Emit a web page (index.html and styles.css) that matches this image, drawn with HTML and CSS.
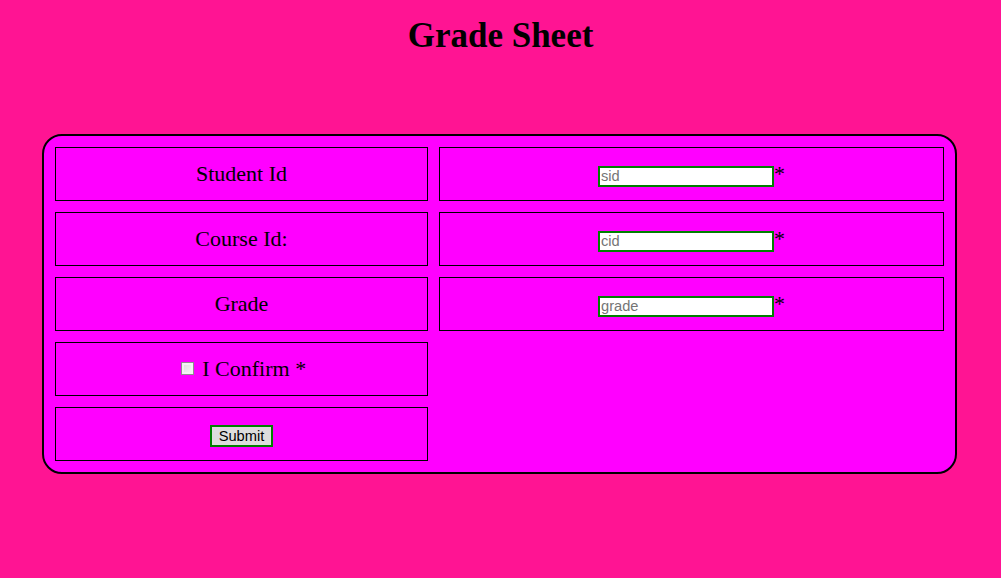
FILE: index.html
```html
<!DOCTYPE html>
<html>
<head>
<meta charset="utf-8">
<title>Grade Sheet</title>
<link rel="stylesheet" href="styles.css">
</head>
<body>
<h1 class="title">Grade Sheet</h1>
<form class="sheet">
  <div class="cell"><div class="line">Student Id</div></div>
  <div class="cell"><div class="line"><input class="field" type="text" placeholder="sid">*</div></div>
  <div class="cell"><div class="line">Course Id:</div></div>
  <div class="cell"><div class="line"><input class="field" type="text" placeholder="cid">*</div></div>
  <div class="cell"><div class="line">Grade</div></div>
  <div class="cell"><div class="line"><input class="field" type="text" placeholder="grade">*</div></div>
  <div class="cell"><div class="line"><input class="check" type="checkbox"> I Confirm *</div></div>
  <div class="blank"></div>
  <div class="cell"><div class="line"><button class="submit" type="button">Submit</button></div></div>
  <div class="blank"></div>
</form>
</body>
</html>
```
FILE: styles.css
```css
html, body {
  margin: 0;
  padding: 0;
}
body {
  background: #ff1493;
  font-family: "Liberation Serif", "Times New Roman", serif;
  color: #000;
}
.title {
  margin: 16px 0 0;
  font-size: 35px;
  font-weight: bold;
  text-align: center;
  line-height: normal;
}
.sheet {
  box-sizing: border-box;
  width: 915px;
  margin: 78px 0 0 42px;
  padding: 11px;
  border: 2px solid #000;
  border-radius: 20px;
  background: #ff00ff;
  display: grid;
  grid-template-columns: 373px 505px;
  grid-auto-rows: 54px;
  gap: 11px;
}
.cell {
  box-sizing: border-box;
  border: 1px solid #000;
  display: flex;
  align-items: center;
  justify-content: center;
  font-size: 22px;
}
.line {
  line-height: normal;
  white-space: nowrap;
}
.field {
  box-sizing: border-box;
  width: 176px;
  height: 21px;
  margin: 0;
  padding: 0 1px;
  border: 2px solid #008000;
  background: #fff;
  font-family: "Liberation Sans", Arial, sans-serif;
  font-size: 14.67px;
  color: #000;
  outline: none;
}
.field::placeholder {
  color: #757575;
}
.check {
  appearance: none;
  -webkit-appearance: none;
  box-sizing: border-box;
  width: 13px;
  height: 13px;
  margin: 3px 3px 3px 4px;
  border: 1px solid #8e8f8f;
  background: linear-gradient(135deg, #dcdcdc, #fafafa);
  box-shadow: inset 0 0 0 2px #f4f4f4;
  vertical-align: -2px;
}
.submit {
  box-sizing: border-box;
  width: 63px;
  height: 22px;
  margin: 0;
  padding: 0;
  border: 2px solid #008000;
  background: #dddddd;
  font-family: "Liberation Sans", Arial, sans-serif;
  font-size: 14.67px;
  color: #000;
}
```
